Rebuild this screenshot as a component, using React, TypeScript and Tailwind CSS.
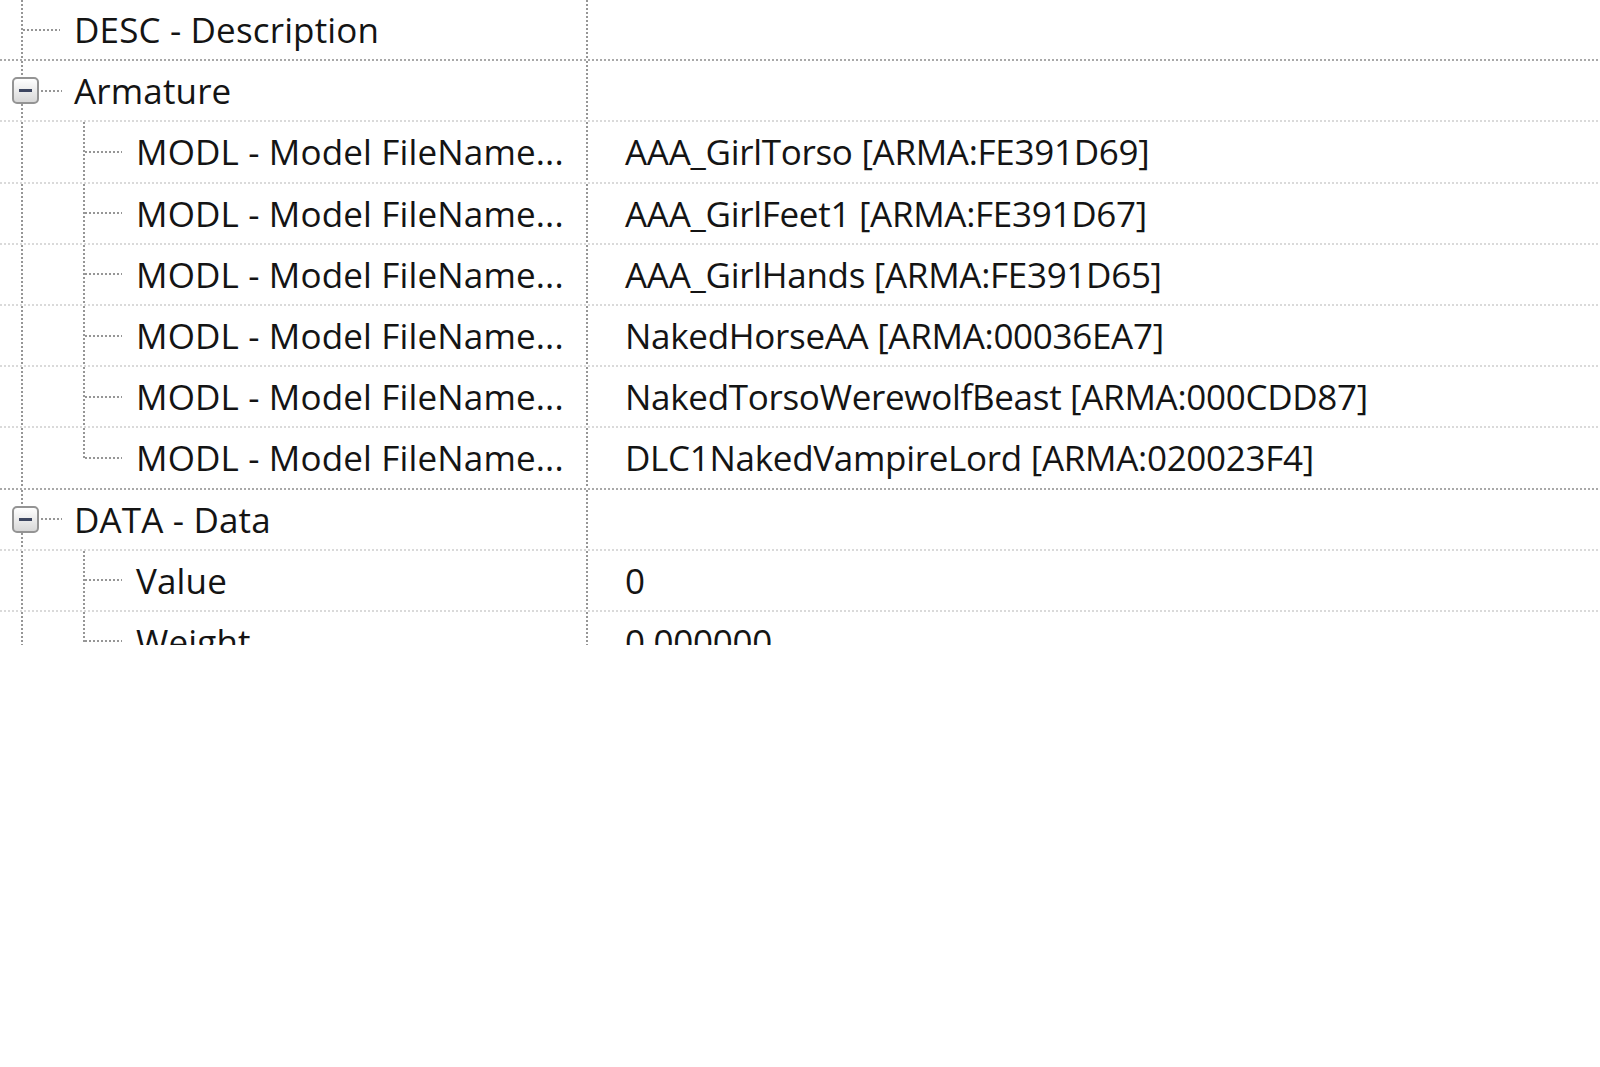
import * as React from 'react';

// Guide pieces drawn in front of each tree label
type Guide = 'pipe' | 'tee' | 'ell' | 'open' | 'none';

type Row = {
  guides: Guide[];
  label: string;
  value?: string;
  strongLine?: boolean;
};

const ROWS: Row[] = [
  { guides: ['tee'], label: 'DESC - Description', strongLine: true },
  { guides: ['open'], label: 'Armature' },
  { guides: ['pipe', 'tee'], label: 'MODL - Model FileName...', value: 'AAA_GirlTorso [ARMA:FE391D69]' },
  { guides: ['pipe', 'tee'], label: 'MODL - Model FileName...', value: 'AAA_GirlFeet1 [ARMA:FE391D67]' },
  { guides: ['pipe', 'tee'], label: 'MODL - Model FileName...', value: 'AAA_GirlHands [ARMA:FE391D65]' },
  { guides: ['pipe', 'tee'], label: 'MODL - Model FileName...', value: 'NakedHorseAA [ARMA:00036EA7]' },
  { guides: ['pipe', 'tee'], label: 'MODL - Model FileName...', value: 'NakedTorsoWerewolfBeast [ARMA:000CDD87]' },
  { guides: ['pipe', 'ell'], label: 'MODL - Model FileName...', value: 'DLC1NakedVampireLord [ARMA:020023F4]', strongLine: true },
  { guides: ['open'], label: 'DATA - Data' },
  { guides: ['pipe', 'tee'], label: 'Value', value: '0' },
  { guides: ['pipe', 'ell'], label: 'Weight', value: '0.000000' },
];

const VLINE = 'w-[2px] bg-[repeating-linear-gradient(to_bottom,#969696_0_2px,transparent_2px_4px)]';
const HLINE = 'h-[2px] bg-[repeating-linear-gradient(to_right,#969696_0_2px,transparent_2px_4px)]';

const MinusBox = () => (
  <div className="w-[27px] h-[27px] shrink-0 rounded-[5px] border-2 border-[#949494] bg-gradient-to-b from-[#ffffff] to-[#d8d8d8] flex items-center justify-center">
    <div className="w-[13px] h-[3px] bg-[#3d4660]" />
  </div>
);

const GuideCell = ({ kind }: { kind: Guide }) => {
  if (kind === 'open') {
    return (
      <div className="w-[62px] h-full shrink-0 flex flex-col">
        <div className="flex-1 pl-[21px] flex">
          <div className={VLINE} />
        </div>
        <div className="flex items-center pl-[12px]">
          <MinusBox />
          <div className={`flex-1 ml-[2px] ${HLINE}`} />
        </div>
        <div className="flex-1 pl-[21px] flex">
          <div className={VLINE} />
        </div>
      </div>
    );
  }

  return (
    <div className="w-[62px] h-full shrink-0 grid grid-cols-[21px_2px_1fr] grid-rows-[1fr_2px_1fr]">
      {(kind === 'pipe' || kind === 'tee') && (
        <div className={`col-start-2 row-start-1 row-span-3 ${VLINE}`} />
      )}
      {kind === 'ell' && <div className={`col-start-2 row-start-1 row-span-2 ${VLINE}`} />}
      {(kind === 'tee' || kind === 'ell') && (
        <div className={`col-start-3 row-start-2 mr-[2px] ${HLINE}`} />
      )}
    </div>
  );
};

const TreeRow = ({ row }: { row: Row }) => (
  <div className="h-[61.2px] shrink-0 flex flex-col">
    <div className="flex-1 flex min-h-0">
      <div className="w-[586px] shrink-0 flex items-stretch">
        {row.guides.map((g, i) => (
          <GuideCell key={i} kind={g} />
        ))}
        <div className="pl-[12px] flex items-center whitespace-nowrap tracking-[0.15px]">{row.label}</div>
      </div>
      <div className={VLINE} />
      <div className="pl-[37px] flex items-center whitespace-nowrap tracking-[-0.3px]">{row.value}</div>
    </div>
    <div
      className={
        row.strongLine
          ? 'h-[2px] shrink-0 bg-[repeating-linear-gradient(to_right,#a9a9a9_0_2px,transparent_2px_4px)]'
          : 'h-[2px] shrink-0 bg-[repeating-linear-gradient(to_right,#dadada_0_2px,transparent_2px_4px)]'
      }
    />
  </div>
);

export default function App() {
  return (
    <div className="w-[1600px] h-[1067px] bg-white overflow-hidden">
      <div className="h-[645px] overflow-hidden flex flex-col font-['Open_Sans',sans-serif] text-[35px] font-medium leading-none text-[#141414]">
        {ROWS.map((row, i) => (
          <TreeRow key={i} row={row} />
        ))}
      </div>
    </div>
  );
}
